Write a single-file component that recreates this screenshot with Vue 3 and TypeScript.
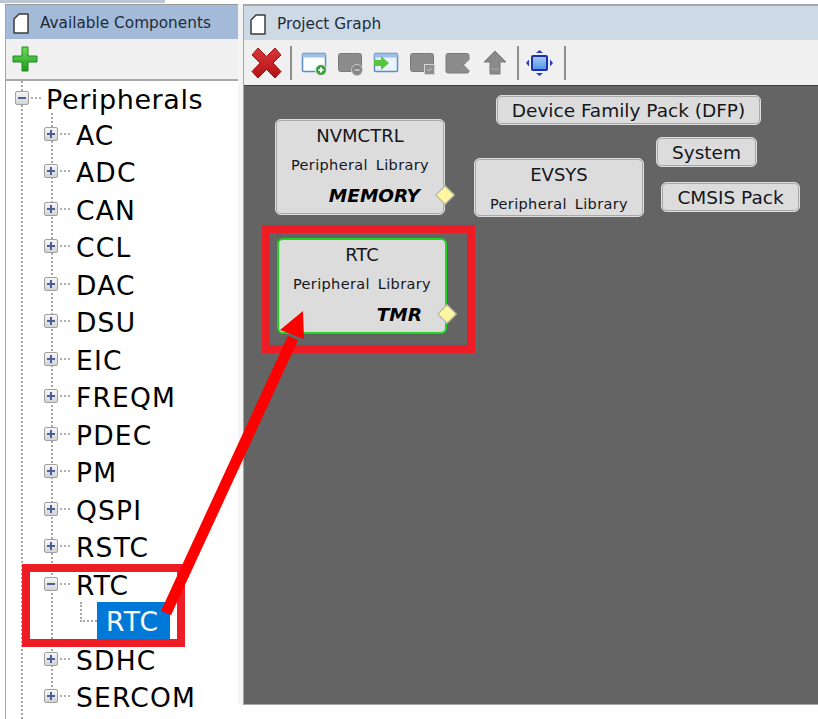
<script setup lang="ts">
interface Row { label: string; open?: boolean; child?: boolean }
const rows: Row[] = [
  { label: 'AC' }, { label: 'ADC' }, { label: 'CAN' }, { label: 'CCL' }, { label: 'DAC' },
  { label: 'DSU' }, { label: 'EIC' }, { label: 'FREQM' }, { label: 'PDEC' }, { label: 'PM' },
  { label: 'QSPI' }, { label: 'RSTC' }, { label: 'RTC', open: true }, { label: 'RTC', child: true },
  { label: 'SDHC' }, { label: 'SERCOM' },
]
interface Node { title: string; sub?: string; tag?: string; x: number; y: number; w: number; h: number; active?: boolean }
const nodes: Node[] = [
  { title: 'NVMCTRL', sub: 'Peripheral Library', tag: 'MEMORY', x: 275, y: 119, w: 170, h: 96 },
  { title: 'EVSYS', sub: 'Peripheral Library', x: 474, y: 158, w: 170, h: 59 },
  { title: 'RTC', sub: 'Peripheral Library', tag: 'TMR', x: 277, y: 238, w: 170, h: 96, active: true },
  { title: 'Device Family Pack (DFP)', x: 496, y: 95, w: 265, h: 30 },
  { title: 'System', x: 656, y: 137, w: 101, h: 30 },
  { title: 'CMSIS Pack', x: 661, y: 182, w: 139, h: 30 },
]
function pos(n: Node): Record<string, string> {
  return { left: n.x - 244 + 'px', top: n.y - 86 + 'px', width: n.w + 'px', height: n.h + 'px' }
}
</script>

<template>
  <div class="page">
    <section class="left">
      <header class="title active-title">
        <svg class="doc" width="16" height="21" viewBox="0 0 16 21"><path d="M1 6 6 1H15V20H1Z" fill="#fff" stroke="#3c3c3c" stroke-width="1.500" stroke-linejoin="round"/></svg>
        <span>Available Components</span>
      </header>
      <div class="left-tools">
        <svg width="26" height="26" viewBox="0 0 26 26">
          <defs><linearGradient id="pg" x1="0" y1="0" x2="0" y2="1"><stop offset="0" stop-color="#6fdc5c"/><stop offset="1" stop-color="#1d9a1d"/></linearGradient></defs>
          <path d="M10 1h6v9h9v6h-9v9h-6v-9H1v-6h9z" fill="url(#pg)" stroke="#1f8a1c" stroke-linejoin="round"/>
        </svg>
      </div>
      <div class="tree">
        <i class="vline vl-root"></i>
        <i class="vline vl-sub"></i>
        <i class="vline vl-child"></i>
        <div class="row root">
          <span class="box"><b class="minus"></b></span><span class="dots"></span>
          <span class="label">Peripherals</span>
        </div>
        <div v-for="(r, i) in rows" :key="i" class="row" :class="{ child: r.child }">
          <template v-if="r.child">
            <span class="cdots"></span>
            <span class="label selected">{{ r.label }}</span>
          </template>
          <template v-else>
            <span class="box"><b class="minus"></b><b v-if="!r.open" class="plus"></b></span><span class="dots"></span>
            <span class="label">{{ r.label }}</span>
          </template>
        </div>
      </div>
    </section>

    <section class="right">
      <div class="frame">
        <header class="title idle-title">
          <svg class="doc" width="16" height="21" viewBox="0 0 16 21"><path d="M1 6 6 1H15V20H1Z" fill="#fff" stroke="#3c3c3c" stroke-width="1.500" stroke-linejoin="round"/></svg>
          <span>Project Graph</span>
        </header>
        <div class="tools">
          <svg class="ic-x" width="31" height="32" viewBox="0 0 31 32">
            <defs><linearGradient id="xg" x1="0" y1="0" x2="0" y2="1"><stop offset="0" stop-color="#d8383a"/><stop offset="1" stop-color="#b30f12"/></linearGradient></defs>
            <path d="M1 8 7 1l8.500 8.500L24 1l6 7-8 8 8 8.500-6 6.500-8.500-8.500L7 31l-6-6.500L9 16z" fill="url(#xg)" stroke="#a51417" stroke-linejoin="round"/>
          </svg>
          <i class="sep sep-first"></i>
          <svg width="26" height="26" viewBox="0 0 26 26"><rect x="1.500" y="3.500" width="23" height="18" rx="1" fill="#fbfdff" stroke="#5d8cc4" stroke-width="1.500"/><rect x="1.500" y="3.500" width="23" height="4" fill="#9dc0e8"/><circle cx="20" cy="20" r="5.500" fill="#3c9c3c" stroke="#e7f3e7"/><path d="M17.500 20h5M20 17.500v5" stroke="#fff" stroke-width="2"/></svg>
          <svg width="26" height="26" viewBox="0 0 26 26"><rect x="1.500" y="3.500" width="23" height="18" rx="2" fill="#8c8c8c" stroke="#7a7a7a"/><circle cx="20" cy="20" r="5.500" fill="#858585" stroke="#c9c9c9"/><path d="M17.500 20h5" stroke="#cfcfcf" stroke-width="1.500"/></svg>
          <svg width="26" height="26" viewBox="0 0 26 26"><rect x="1.500" y="3.500" width="23" height="18" rx="1" fill="#eaf3fc" stroke="#5d8cc4" stroke-width="1.500"/><rect x="1.500" y="3.500" width="23" height="4" fill="#9dc0e8"/><path d="M1 10h7V6l8 7-8 7v-4H1z" fill="#57c63c"/></svg>
          <svg width="26" height="26" viewBox="0 0 26 26"><rect x="1.500" y="3.500" width="23" height="18" rx="2" fill="#8c8c8c" stroke="#7a7a7a"/><rect x="15.500" y="14.500" width="10" height="10" fill="#8f8f8f" stroke="#d4d4d4"/><path d="M18 19l2 2 3-3" stroke="#c2c2c2" fill="none"/></svg>
          <svg width="26" height="26" viewBox="0 0 26 26"><path d="M3 3.500H22a2 2 0 0 1 2 2V10l-6 5 6 5v1a2 2 0 0 1-2 2H3a2 2 0 0 1-2-2V5.500a2 2 0 0 1 2-2z" fill="#8c8c8c" stroke="#7a7a7a"/><path d="M25 9l-6 6 6 6" stroke="#bdbdbd" fill="none"/></svg>
          <svg class="ic-up" width="24" height="26" viewBox="0 0 24 26"><path d="M12 1 23 12h-6v12H7V12H1z" fill="#8a8a8a" stroke="#7a7a7a" stroke-linejoin="round"/><path d="M8 19h8" stroke="#a8a8a8"/></svg>
          <i class="sep"></i>
          <svg class="ic-fit" width="30" height="28" viewBox="0 0 30 28">
            <defs><linearGradient id="fg" x1="0" y1="0" x2="0" y2="1"><stop offset="0" stop-color="#a9cdf5"/><stop offset="1" stop-color="#4f93e6"/></linearGradient></defs>
            <rect x="8" y="7" width="15" height="14" rx="1" fill="url(#fg)" stroke="#1b2fb0" stroke-width="2"/>
            <path d="M15.500 1l3.500 3h-7zM15.500 27l3.500-3h-7zM2 14l3-3.500v7zM29 14l-3-3.500v7z" fill="#1d3fc0"/>
          </svg>
          <i class="sep"></i>
        </div>
        <div class="canvas">
          <div v-for="n in nodes" :key="n.title" class="node" :class="{ act: n.active, small: !n.sub }" :style="pos(n)">
            <div class="n-title">{{ n.title }}</div>
            <div v-if="n.sub" class="n-sub">{{ n.sub }}</div>
            <div v-if="n.tag" class="n-tag">{{ n.tag }}</div>
            <i v-if="n.tag" class="port"></i>
          </div>
        </div>
      </div>
    </section>

    <i class="mark mark-node"></i>
    <i class="mark mark-tree"></i>
    <svg class="arrow" width="818" height="719" viewBox="0 0 818 719">
      <path d="M166 613 293 338" stroke="#fe0000" stroke-width="11" fill="none"/>
      <path d="M303 311 280 330 304 339Z" fill="#fe0000"/>
    </svg>
  </div>
</template>

<style>
html, body { margin: 0; background: #fff; }
</style>

<style scoped>
.page {
  position: relative;
  width: 818px;
  height: 719px;
  overflow: hidden;
  display: flex;
  align-items: flex-start;
  padding: 4px 0 0 5px;
  box-sizing: border-box;
  background: linear-gradient(#bcc6d2, #bcc6d2) 0 0 / 165px 3px no-repeat, #fff;
  font-family: "DejaVu Sans", sans-serif;
  color: #000;
}
.left {
  width: 233px;
  height: 715px;
  flex: none;
  display: flex;
  flex-direction: column;
  border-left: 1px solid #a6a6a6;
  border-top: 1px solid #9a9a9a;
  box-sizing: border-box;
}
.right {
  flex: 1;
  height: 701px;
  padding-left: 5px;
  background: #f4f4f4;
  box-sizing: border-box;
}
.frame {
  height: 100%;
  margin-top: 0;
  display: flex;
  flex-direction: column;
  box-sizing: border-box;
  border: 1px solid #a6a6a6;
  border-top-width: 2px;
  border-right: 0;
}
.title {
  display: flex;
  align-items: center;
  height: 34px;
  flex: none;
  box-sizing: border-box;
  padding-top: 2px;
  font-size: 15.300px;
  color: #222b3a;
}
.active-title { background: #a3bbd8; padding-left: 7px; gap: 11px; }
.idle-title { background: #cddae6; padding-left: 6px; gap: 11px; }
.left-tools {
  height: 40px;
  flex: none;
  display: flex;
  align-items: center;
  padding-left: 6px;
  background: #f0f0f0;
  border-bottom: 2px solid #a9a9a9;
}
.tree { position: relative; flex: 1; background: #fff; }
.vline { position: absolute; width: 0; border-left: 2px dotted #a8a8a8; }
.vl-root { left: 15px; top: 0; bottom: 0; }
.vl-sub { left: 45px; top: 32px; height: 590px; }
.vl-child { left: 74px; top: 521px; height: 20px; }
.row {
  position: relative;
  height: 37.530px;
  display: flex;
  align-items: center;
  padding-left: 38px;
}
.row.root { padding-left: 9px; height: 35px; }
.box {
  position: relative;
  z-index: 1;
  width: 12px;
  height: 12px;
  flex: none;
  margin-top: -2px;
  border: 1px solid #a0a0a0;
  border-radius: 2px;
  background: linear-gradient(#f6f6f6, #d4d4d4);
}
.minus { position: absolute; left: 2px; right: 2px; top: 5px; height: 2px; background: #4a5f9c; }
.plus { position: absolute; top: 2px; bottom: 2px; left: 5px; width: 2px; background: #4a5f9c; }
.dots { width: 10px; flex: none; margin: -2px 6px 0 2px; border-top: 2px dotted #b0b0b0; }
.label { font-size: 26.500px; letter-spacing: 1.200px; line-height: 32px; margin-top: 2px; white-space: nowrap; }
.root .label { font-size: 27px; letter-spacing: .6px; margin-left: -1px; }
.row.child { padding-left: 74px; }
.cdots { width: 17px; height: 0; flex: none; border-top: 2px dotted #a8a8a8; margin-bottom: 2px; }
.selected {
  background: #0078d7;
  color: #fff;
  width: 64px;
  padding: 3px 0 0 9px;
  line-height: 34px;
  margin: 0 0 4px;
}
.tools {
  height: 45px;
  flex: none;
  display: flex;
  align-items: center;
  gap: 10px;
  padding-left: 7px;
  background: #f0f0f0;
}
.ic-x { margin-right: -2px; }
.sep-first { margin-right: -1px; }
.ic-up { margin-left: 2px; }
.ic-fit { margin-left: -5px; }
.sep { width: 2px; height: 34px; background: #8e8e8e; }
.canvas { position: relative; flex: 1; background: #646464; border-top: 1px solid #3d3d3d; }
.node {
  position: absolute;
  box-sizing: border-box;
  background: #dcdcdc;
  border: 2px solid #a8a8a8;
  border-radius: 6px;
  outline: 1px solid #dedede;
  outline-offset: -1px;
  text-align: center;
  color: #14161c;
}
.node.act { border-color: #1fd41f; outline: 0; }
.n-title { font-size: 18px; line-height: 20px; padding-top: 5px; }
.n-sub {
  font-size: 14.500px;
  letter-spacing: .35px;
  word-spacing: 3px;
  line-height: 18px;
  margin-top: 10px;
  white-space: nowrap;
}
.n-tag {
  position: absolute;
  right: 23px;
  bottom: 6px;
  font-size: 18.500px;
  font-weight: 700;
  font-style: italic;
  line-height: 22px;
  color: #000;
}
.small .n-title { padding-top: 2px; font-size: 18.500px; line-height: 24px; white-space: nowrap; }
.port {
  position: absolute;
  right: -9px;
  bottom: 11px;
  width: 12px;
  height: 12px;
  background: #fdf6a0;
  border: 1px solid #a8a8a8;
  transform: rotate(45deg);
}
.mark { position: absolute; box-sizing: border-box; border: 8px solid #ee1c25; }
.mark-node { left: 262px; top: 225px; width: 213px; height: 128px; }
.mark-tree { left: 22px; top: 564px; width: 163px; height: 83px; }
.arrow { position: absolute; left: 0; top: 0; pointer-events: none; }
</style>
